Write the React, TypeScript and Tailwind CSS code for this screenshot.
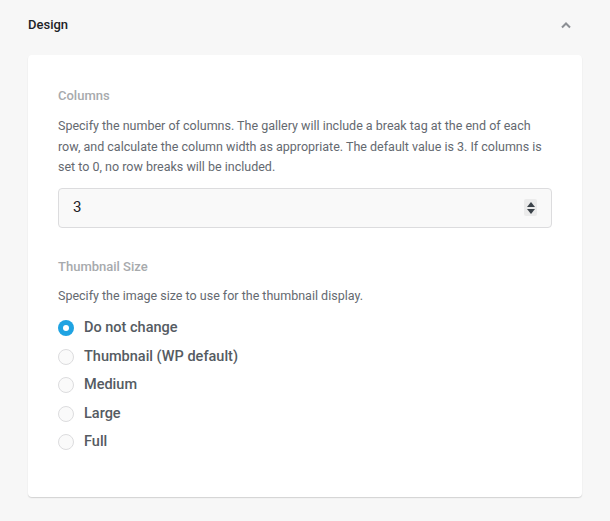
import React from "react";

const options = ["Do not change", "Thumbnail (WP default)", "Medium", "Large", "Full"];

export default function App() {
  return (
    <div className="min-h-[521px] w-[610px] bg-[#f7f7f7] px-[28px] pt-[14px] pb-[24px] font-['Roboto',sans-serif]">
      <div className="flex h-[22px] items-center justify-between">
        <span className="text-[13px] font-medium text-[#1d2327]">Design</span>
        <svg width="12" height="8" viewBox="0 0 12 8" className="mr-[10px]">
          <path d="M2 6.5 L6 2.5 L10 6.5" fill="none" stroke="#8c8f94" strokeWidth="2" />
        </svg>
      </div>
      <div className="mt-[19px] rounded-[4px] bg-white px-[30px] pt-[32px] pb-[47px] shadow-[0_1px_1px_rgba(0,0,0,0.1),0_1px_2px_rgba(0,0,0,0.06)]">
        <div className="text-[13px] font-medium leading-[18px] text-[#a7aaad]">Columns</div>
        <p className="mt-[11px] text-[12.5px] leading-[20.5px] text-[#646970]">
          Specify the number of columns. The gallery will include a break tag at the end of each row, and calculate the column width as appropriate. The default value is 3. If columns is set to 0, no row breaks will be included.
        </p>
        <div className="mt-[10px] flex h-[40px] w-[494px] items-center justify-between rounded-[4px] border border-[#dcdcde] bg-[#f9f9f9] pl-[14px] pr-[14px]">
          <span className="text-[15px] text-[#1d2327]">3</span>
          <div className="flex h-[17px] w-[13px] flex-col items-center justify-center gap-[2px] rounded-[2px] bg-[#ebebeb]">
            <svg width="8" height="5" viewBox="0 0 8 5"><path d="M0 5 L4 0 L8 5 Z" fill="#3c434a" /></svg>
            <svg width="8" height="5" viewBox="0 0 8 5"><path d="M0 0 L4 5 L8 0 Z" fill="#3c434a" /></svg>
          </div>
        </div>
        <div className="mt-[30px] text-[13px] font-medium leading-[18px] text-[#a7aaad]">Thumbnail Size</div>
        <p className="mt-[10px] text-[12.5px] leading-[20.5px] text-[#646970]">
          Specify the image size to use for the thumbnail display.
        </p>
        <div className="mt-[14px] flex flex-col gap-[12.5px]">
          {options.map((o, i) => (
            <label key={o} className="flex h-[16px] items-center gap-[10px]">
              {i === 0 ? (
                <span className="flex h-[16px] w-[16px] items-center justify-center rounded-full bg-[#1fa3e2]">
                  <span className="h-[6px] w-[6px] rounded-full bg-white" />
                </span>
              ) : (
                <span className="h-[16px] w-[16px] rounded-full border border-[#dcdcde] bg-[#fafafa]" />
              )}
              <span className="text-[14.5px] font-medium text-[#555b62]">{o}</span>
            </label>
          ))}
        </div>
      </div>
    </div>
  );
}
